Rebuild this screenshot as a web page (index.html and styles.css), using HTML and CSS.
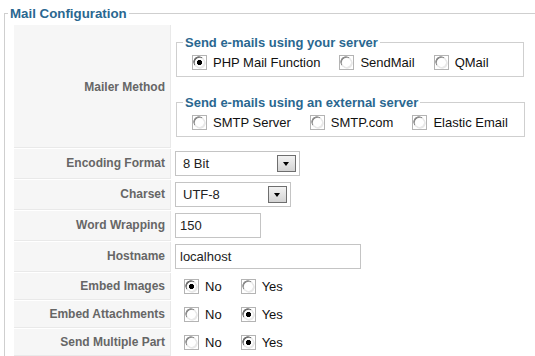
FILE: index.html
```html
<!DOCTYPE html>
<html lang="en">
<head>
  <meta charset="UTF-8" />
  <title>Mail Configuration</title>
  <link rel="stylesheet" href="styles.css">
</head>
<body>
  <fieldset class="config">
    <legend>Mail Configuration</legend>
    <table class="admintable">
      <tr class="tall">
        <td class="key">Mailer Method</td>
        <td class="field">
          <fieldset class="group">
            <legend>Send e-mails using your server</legend>
            <div class="opts">
              <label class="opt"><input type="radio" name="mailer" checked>PHP Mail Function</label>
              <label class="opt"><input type="radio" name="mailer">SendMail</label>
              <label class="opt"><input type="radio" name="mailer">QMail</label>
            </div>
          </fieldset>
          <fieldset class="group second">
            <legend>Send e-mails using an external server</legend>
            <div class="opts">
              <label class="opt"><input type="radio" name="mailer">SMTP Server</label>
              <label class="opt"><input type="radio" name="mailer">SMTP.com</label>
              <label class="opt"><input type="radio" name="mailer">Elastic Email</label>
            </div>
          </fieldset>
        </td>
      </tr>
      <tr class="box">
        <td class="key">Encoding Format</td>
        <td class="field">
          <span class="select enc">
            <select><option>8 Bit</option><option>7 Bit</option></select>
            <span class="btn"></span>
          </span>
        </td>
      </tr>
      <tr class="box">
        <td class="key">Charset</td>
        <td class="field">
          <span class="select charset">
            <select><option>UTF-8</option></select>
            <span class="btn"></span>
          </span>
        </td>
      </tr>
      <tr class="box">
        <td class="key">Word Wrapping</td>
        <td class="field"><input type="text" class="text short" value="150"></td>
      </tr>
      <tr class="box">
        <td class="key">Hostname</td>
        <td class="field"><input type="text" class="text long" value="localhost"></td>
      </tr>
      <tr class="radios">
        <td class="key">Embed Images</td>
        <td class="field">
          <div class="opts">
            <label class="opt"><input type="radio" name="images" checked>No</label>
            <label class="opt"><input type="radio" name="images">Yes</label>
          </div>
        </td>
      </tr>
      <tr class="radios">
        <td class="key">Embed Attachments</td>
        <td class="field">
          <div class="opts">
            <label class="opt"><input type="radio" name="attach">No</label>
            <label class="opt"><input type="radio" name="attach" checked>Yes</label>
          </div>
        </td>
      </tr>
      <tr class="radios">
        <td class="key">Send Multiple Part</td>
        <td class="field">
          <div class="opts">
            <label class="opt"><input type="radio" name="multi">No</label>
            <label class="opt"><input type="radio" name="multi" checked>Yes</label>
          </div>
        </td>
      </tr>
      <tr class="radios">
        <td class="key">&nbsp;</td>
        <td class="field"></td>
      </tr>
    </table>
  </fieldset>
</body>
</html>
```

FILE: styles.css
```css
body {
  margin: 0;
  font-family: "Liberation Sans", Arial, sans-serif;
  font-size: 13px;
  color: #222;
  background: #fff;
  overflow: hidden;
}
.config {
  margin: 6px 0 0 4px;
  padding: 3px 0 0 8px;
  width: 620px;
  border: 1px solid #cfcfcf;
  border-right: none;
}
legend {
  font-weight: bold;
  font-size: 13px;
  line-height: 15px;
  color: #2a6790;
  padding: 0 2px;
}
.config > legend {
  margin-left: -5px;
  font-size: 13.3px;
}
.admintable {
  border-spacing: 1px;
  border-collapse: separate;
}
.admintable td {
  padding: 2px 3px 3px;
  vertical-align: middle;
}
.key {
  width: 148px;
  background: #f6f6f6;
  color: #666;
  font-weight: bold;
  font-size: 12px;
  text-align: right;
  white-space: nowrap;
  padding-right: 5px !important;
  border-bottom: 1px solid #e9e9e9;
  border-right: 1px solid #e9e9e9;
}
.tall .key {
  padding-top: 4px;
}
.box td {
  height: 24px;
}
.radios td {
  height: 21px;
}
.group {
  box-sizing: border-box;
  width: 348px;
  margin: 8px 0 0 1px;
  padding: 2px 6px 4px;
  border: 1px solid #cfcfcf;
}
.group.second {
  margin-top: 18px;
  margin-bottom: 8px;
}
.opts {
  display: flex;
  align-items: center;
  height: 20px;
  white-space: nowrap;
}
.opt {
  display: flex;
  flex-shrink: 0;
  align-items: center;
  margin-right: 10px;
  color: #111;
}
.opt input {
  appearance: none;
  -webkit-appearance: none;
  box-sizing: border-box;
  flex-shrink: 0;
  width: 15px;
  height: 15px;
  margin: 0 6px 0 9px;
  border: 1px solid #b4b4b4;
  background:
    radial-gradient(circle at 50% 50%, #fff 0 4px, transparent 4.6px),
    radial-gradient(circle at 55% 55%, #e8e8e8 0 5.2px, transparent 5.8px),
    radial-gradient(circle at 45% 45%, #8c8c8c 0 5.2px, transparent 5.8px),
    #fff;
}
.opt input:checked {
  background:
    radial-gradient(circle at 50% 50%, #000 0 2.3px, transparent 2.9px),
    radial-gradient(circle at 50% 50%, #fff 0 4px, transparent 4.6px),
    radial-gradient(circle at 55% 55%, #e8e8e8 0 5.2px, transparent 5.8px),
    radial-gradient(circle at 45% 45%, #6f6f6f 0 5.2px, transparent 5.8px),
    #fff;
}
.select {
  position: relative;
  display: inline-block;
  vertical-align: middle;
}
.select select {
  appearance: none;
  -webkit-appearance: none;
  box-sizing: border-box;
  height: 25px;
  padding: 0 0 0 7px;
  border: 1px solid #c4c4c4;
  border-radius: 0;
  background: #fff;
  font-family: inherit;
  font-size: 13px;
  color: #222;
}
.enc select {
  width: 125px;
}
.charset select {
  width: 116px;
}
.select .btn {
  position: absolute;
  right: 4px;
  top: 4px;
  box-sizing: border-box;
  width: 19px;
  height: 17px;
  border: 1px solid #6e6e6e;
  background: linear-gradient(#f2f2f2, #d3d3d3);
  pointer-events: none;
}
.select .btn::after {
  content: "";
  position: absolute;
  left: 5px;
  top: 6px;
  border-left: 3.5px solid transparent;
  border-right: 3.5px solid transparent;
  border-top: 4px solid #000;
}
.text {
  box-sizing: border-box;
  height: 25px;
  padding: 0 4px;
  border: 1px solid #c4c4c4;
  font-family: inherit;
  font-size: 13px;
  color: #222;
  vertical-align: middle;
}
.text.short {
  width: 86px;
}
.text.long {
  width: 186px;
}
```
